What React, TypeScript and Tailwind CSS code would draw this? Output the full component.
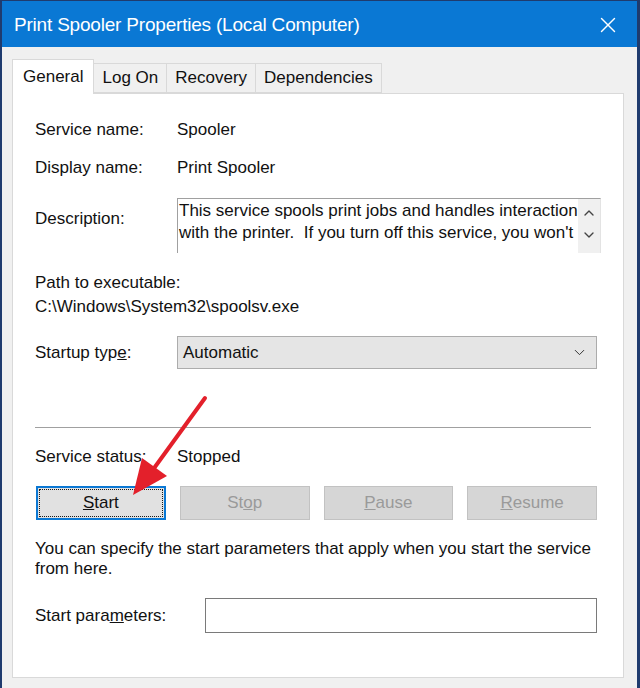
import { X, ChevronDown, ChevronUp } from 'lucide-react';

// Windows service properties dialog (General tab)
const tabs = ['General', 'Log On', 'Recovery', 'Dependencies'];

function Row({ label, children, className = '' }: { label: React.ReactNode; children: React.ReactNode; className?: string }) {
  return (
    <div className={`flex items-center ${className}`}>
      <div className="w-[142px] shrink-0">{label}</div>
      {children}
    </div>
  );
}

export default function App() {
  return (
    <div
      className="relative w-[640px] h-[688px] overflow-hidden bg-[#f0f0f0] border-l-2 border-r-[3px] border-t border-[#1f3b6e] text-[17px] text-[#111] flex flex-col"
      style={{ fontFamily: '"Liberation Sans", Arial, sans-serif' }}
    >
      {/* title bar */}
      <div className="h-[46px] shrink-0 bg-[#0a78d4] flex items-center justify-between pl-[12px] pr-[16px] pt-[2px] text-white">
        <span className="text-[19px] tracking-[-0.2px]">Print Spooler Properties (Local Computer)</span>
        <X className="h-[26px] w-[26px]" strokeWidth={1.3} />
      </div>

      <div className="flex-1 flex flex-col pl-[10px] pr-[13px] pt-[14px]">
        {/* tabs */}
        <div className="flex items-end h-[32px]">
          {tabs.map((t, i) =>
            i === 0 ? (
              <div key={t} className="relative z-10 h-[35px] -mb-px bg-white border border-b-0 border-[#d9d9d9] px-[10px] flex items-center">
                {t}
              </div>
            ) : (
              <div key={t} className="h-[30px] bg-[#f0f0f0] border border-l-0 border-[#d9d9d9] px-[8px] flex items-center">
                {t}
              </div>
            )
          )}
        </div>

        {/* panel */}
        <div className="h-[585px] bg-white border border-[#d9d9d9] pl-[22px] pr-[26px] pt-[24px] flex flex-col">
          <Row label="Service name:" className="h-[24px]">Spooler</Row>
          <Row label="Display name:" className="h-[24px] mt-[14px]">Print Spooler</Row>

          <div className="flex items-start mt-[18px]">
            <div className="w-[142px] shrink-0 pt-[8px]">Description:</div>
            <div className="flex-1 h-[55px] flex border-t border-l border-[#a0a0a0] border-r border-r-[#e3e3e3]">
              <div className="flex-1 overflow-hidden whitespace-nowrap pl-[1px] pt-[1px] leading-[22px]">
                <div>This service spools print jobs and handles interaction</div>
                <div>with the printer.&nbsp; If you turn off this service, you won't</div>
              </div>
              <div className="w-[22px] bg-[#f0f0f0] flex flex-col items-center pt-[6px] gap-[6px] text-[#444]">
                <ChevronUp className="h-[16px] w-[16px]" strokeWidth={2} />
                <ChevronDown className="h-[16px] w-[16px]" strokeWidth={2} />
              </div>
            </div>
          </div>

          <div className="h-[24px] mt-[18px] flex items-center">Path to executable:</div>
          <div className="h-[24px] flex items-center">C:\Windows\System32\spoolsv.exe</div>

          <Row label={<>Startup typ<span className="underline">e</span>:</>} className="mt-[17px]">
            <div className="flex-1 h-[33px] bg-[#e5e5e5] border border-[#acacac] flex items-center justify-between pl-[5px] pr-[8px]">
              <span>Automatic</span>
              <ChevronDown className="h-[17px] w-[17px] text-[#333]" strokeWidth={1.4} />
            </div>
          </Row>

          <div className="h-px bg-[#a0a0a0] mt-[58px] mr-[6px]" />

          <Row label="Service status:" className="h-[24px] mt-[17px]">Stopped</Row>

          <div className="grid grid-cols-4 gap-[14px] mt-[17px] h-[32px] pl-[1px]">
            <div className="bg-[#e1e1e1] border-2 border-[#0a78d4] p-[1px]">
              <div className="h-full border border-dotted border-[#1a1a1a] flex items-center justify-center">
                <span><span className="underline">S</span>tart</span>
              </div>
            </div>
            <div className="bg-[#d6d6d6] border border-[#c2c2c2] flex items-center justify-center text-[#9a9a9a]">
              <span>St<span className="underline">o</span>p</span>
            </div>
            <div className="bg-[#d6d6d6] border border-[#c2c2c2] flex items-center justify-center text-[#9a9a9a]">
              <span><span className="underline">P</span>ause</span>
            </div>
            <div className="bg-[#d6d6d6] border border-[#c2c2c2] flex items-center justify-center text-[#9a9a9a]">
              <span><span className="underline">R</span>esume</span>
            </div>
          </div>

          <p className="mt-[21px] leading-[20px]">
            You can specify the start parameters that apply when you start the service from here.
          </p>

          <div className="flex items-center mt-[19px]">
            <div className="w-[170px] shrink-0">Start para<span className="underline">m</span>eters:</div>
            <div className="flex-1 h-[35px] border border-[#7a7a7a] bg-white" />
          </div>
        </div>
      </div>

      {/* red annotation arrow */}
      <svg className="absolute left-0 top-0 pointer-events-none" width="640" height="688">
        <line x1="203" y1="397" x2="150" y2="470" stroke="#e3202b" strokeWidth="4" strokeLinecap="round" />
        <polygon points="131,494 140,457 165,475" fill="#e3202b" />
      </svg>
    </div>
  );
}
